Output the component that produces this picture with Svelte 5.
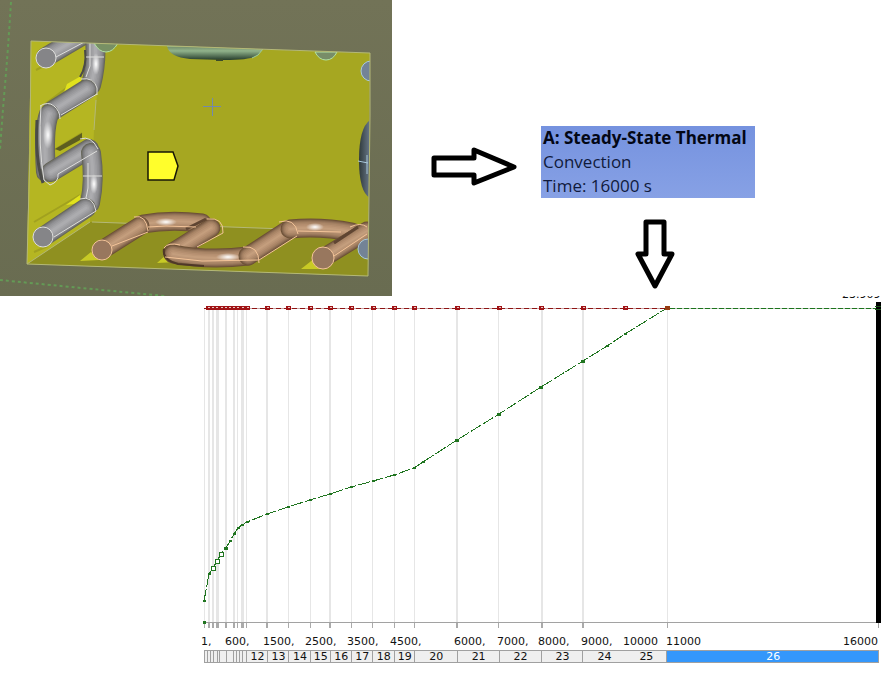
<script>
  const gridLines = [
    [204, 1], [208, 2], [212, 2], [216, 3], [225, 2], [233, 2], [237, 1], [241, 3], [246, 1],
    [266, 2], [288, 1], [310, 1], [329, 2], [351, 1], [372, 1], [394, 1], [414, 1],
    [456, 2], [498, 1], [541, 2], [582, 2], [667, 1]
  ];
  const limitMarks = [
    208, 212, 216, 221, 225, 229, 233, 237, 242, 247, 267, 288, 310, 330, 351, 373, 394, 414,
    457, 499, 541, 583, 625, 667
  ];
  const curve = [
    [204, 601], [209, 574], [213, 568], [217, 561], [221, 554], [226, 548], [230, 541],
    [234, 534], [238, 528], [242, 525], [247, 522], [267, 514], [288, 507], [310, 500],
    [330, 494], [351, 487], [373, 481], [394, 475], [414, 468], [423, 462], [457, 440],
    [499, 414], [541, 387], [583, 361], [607, 346], [625, 334], [667, 308]
  ];
  const curvePoints = curve.map((p) => p.join(',')).join(' ');
  const bigMarks = [226, 457, 499, 541, 583];
  const openMarks = [213, 217, 221];

  const timeLabels = [
    [201, '1,'], [225, '600,'], [263, '1500,'], [305, '2500,'], [347, '3500,'], [390, '4500,'],
    [454, '6000,'], [497, '7000,'], [538, '8000,'], [581, '9000,'], [623, '10000'],
    [666, '11000'], [843, '16000']
  ];

  const left = 204;
  const edges = [
    204, 207, 210, 213, 217, 219, 226, 233, 236, 239, 242, 246, 267, 288, 310, 330, 351, 372,
    394, 414, 457, 499, 541, 583, 625, 667, 879
  ];
  const steps = edges.slice(1).map((end, i) => ({
    number: i + 1,
    span: end - edges[i],
    label: i >= 11 ? String(i + 1) : ''
  }));

  // Nested strokes from the dark rim to the lit middle give a tube its roundness.
  const steel = [
    [20, '#66665a'], [18, '#747473'], [16, '#828284'], [14, '#8c8c8f'], [12, '#959598'],
    [9, '#9d9da0'], [6, '#a5a5a8'], [3, '#acacaf']
  ];
  const copper = [
    [19, '#6d5136'], [17, '#80624a'], [15, '#927257'], [13, '#a07d60'], [11, '#ab8768'],
    [8, '#b58f70'], [5, '#bd9777'], [2, '#c49e7d']
  ];
</script>

{#snippet pipe(d, tone)}
  <g fill="none" stroke-linecap="round" stroke-linejoin="round">
    {#each tone as [width, color]}
      <path {d} stroke={color} stroke-width={width} />
    {/each}
  </g>
{/snippet}

<main>
  <section class="top">
    <svg class="model" viewBox="0 0 392 296" role="img" aria-label="Convection surfaces of the tank model">
      <defs>
        <linearGradient id="backdrop" x1="0" y1="0" x2="0" y2="1">
          <stop offset="0" stop-color="#727357" />
          <stop offset="1" stop-color="#696c51" />
        </linearGradient>
        <linearGradient id="greenPipe" x1="0" y1="0" x2="0" y2="1">
          <stop offset="0" stop-color="#708866" />
          <stop offset=".35" stop-color="#91b38b" />
          <stop offset="1" stop-color="#263c2c" />
        </linearGradient>
        <linearGradient id="bluePipe" x1="0" y1="0" x2="1" y2="0">
          <stop offset="0" stop-color="#303a3c" />
          <stop offset="1" stop-color="#69788a" />
        </linearGradient>
        <radialGradient id="shine">
          <stop offset="0" stop-color="#fff" />
          <stop offset=".4" stop-color="#fff" stop-opacity=".6" />
          <stop offset="1" stop-color="#fff" stop-opacity="0" />
        </radialGradient>
        <clipPath id="room"><path d="M31 41L370 53 368 276 27 264Z" /></clipPath>
      </defs>
      <rect width="392" height="296" fill="url(#backdrop)" />
      <path d="M11 2Q8 50 5 85T0 150M0 280Q60 286 165 296" class="dots" />
      <path d="M31 41L370 53 368 276 27 264Z" fill="#a6a721" />
      <path d="M31 41L101 44 94 130 90 222 27 264Z" fill="#b5b622" />
      <path d="M27 264L90 222 368 232V276Z" fill="#8f9020" />
      <path d="M96 100L94 130M92 222L230 227 368 232M90 222L27 264" class="edge" />
      <g clip-path="url(#room)">
        <path d="M36 70L82 46M45 104L80 78M54 150L82 133M34 222L80 195M34 252L48 246" stroke="#a1a11f" stroke-width="2" />
        <path d="M55 149L82 133V139L60 151Z" fill="#5d5d20" />
        <path d="M67 84L81 76V87L64 92ZM66 205L80 195V203Z" fill="#e1e21c" />
        <path d="M80 261L91 252 99 260ZM157 263L167 254 177 262ZM301 269L315 258 322 269Z" fill="#c8ca25" />

        {@render pipe('M46 57L90 31', steel)}
        {@render pipe('M95 38Q97 63 91 85', steel)}
        {@render pipe('M87 89L52 111', steel)}
        {@render pipe('M49 114Q43 130 46 172', steel)}
        {@render pipe('M51 172L89 149', steel)}
        {@render pipe('M91 153Q95 180 90 203', steel)}
        {@render pipe('M86 208L43 237', steel)}
        <path d="M37 120Q35 160 43 183" fill="none" stroke="#4b4b48" stroke-width="3" />
        <path d="M85 50Q87 66 80 77" fill="none" stroke="#4b4b48" stroke-width="2" />
        <ellipse cx="96" cy="64" rx="4" ry="11" fill="url(#shine)" />
        <ellipse cx="48" cy="135" rx="5" ry="14" fill="url(#shine)" />
        <ellipse cx="94" cy="184" rx="4" ry="10" fill="url(#shine)" />
        <g class="steelLine">
          <circle cx="46" cy="58" r="10" fill="#858588" />
          <circle cx="43" cy="237" r="10" fill="#858588" />
          <path d="M56 57L90 39M90 43V66L86 77M86 57H104M81 79Q94 77 97 88V95M97 94L61 115M40 106Q48 101 54 106T60 119M41 106Q38 145 44 180L50 185M80 139Q91 135 98 149M58 174L97 151M58 174Q59 182 50 185M88 163V188L86 198M83 176H102M80 199Q93 195 96 211M96 211L54 237" fill="none" />
        </g>

        {@render pipe('M143 224Q170 219 202 223', copper)}
        {@render pipe('M211 228L173 252', copper)}
        {@render pipe('M173 254Q209 261 248 256', copper)}
        {@render pipe('M248 256L288 230', copper)}
        {@render pipe('M290 229Q320 226 352 232', copper)}
        {@render pipe('M367 231L323 258', copper)}
        {@render pipe('M140 226L102 250', copper)}
        <path d="M164 249Q162 260 178 264L204 266" fill="none" stroke="#4f3828" stroke-width="2" />
        <path d="M186 229L206 219M334 243L358 227" stroke="#5f4532" stroke-width="3" />
        <ellipse cx="166" cy="222" rx="11" ry="4" fill="url(#shine)" />
        <ellipse cx="228" cy="257" rx="12" ry="4" fill="url(#shine)" />
        <ellipse cx="315" cy="227" rx="9" ry="4" fill="url(#shine)" />
        <g class="copperLine">
          <circle cx="102" cy="250" r="10" fill="#98775e" />
          <circle cx="323" cy="258" r="11" fill="#98775e" />
          <path d="M134 217Q146 214 148 231M112 246L148 232M148 227L166 226 196 227M207 219Q224 217 223 233M223 233L197 247M164 248Q168 242 180 245M165 257L202 261 258 260M243 247Q259 245 259 263M259 260L297 236M279 222Q295 217 298 234M298 231L341 232M350 227Q361 222 367 227M334 256L367 234" fill="none" />
        </g>

        <path d="M94 43H118Q113 52 106 52T94 43Z" fill="#789064" stroke="#b2e4a4" />
        <path d="M167 46L263 49 258 55Q251 60 224 60L190 59Q169 57 167 46Z" fill="url(#greenPipe)" />
        <path d="M167 46L224 47 263 49 258 55 252 58" class="greenLine" />
        <path d="M216 60H223" stroke="#3b4b2a" stroke-width="2" />
        <path d="M315 52H337Q333 60 326 60T315 52Z" fill="#788d68" stroke="#b2e4a4" />
        <circle cx="371" cy="71" r="10" fill="#738396" class="blueLine" />
        <path d="M370 120Q359 128 359 160T370 198Z" fill="url(#bluePipe)" />
        <path d="M358 161L368 163M367 155V174" class="blueLine" />
        <circle cx="368" cy="249" r="10" fill="#738396" class="blueLine" />
      </g>
      <path d="M31 41L370 53 370 115 368 276 27 264 30 150Z" class="edge" />
      <path d="M203 106.5H221M212.500 98V116" stroke="#7389ad" fill="none" />
      <path d="M148 152H173L178 166 174 180H148Z" fill="#fffe2c" stroke="#171706" stroke-width="1.5" />
    </svg>

    <div class="flow">
      <svg class="arrowRight" width="88" height="40" viewBox="0 0 88 40" aria-hidden="true">
        <path d="M3 11H43V3L83 20 43 36V28H3Z" />
      </svg>
      <div class="result">
        <div class="card">
          <strong>A: Steady-State Thermal</strong>
          <span>Convection</span>
          <span>Time: 16000 s</span>
        </div>
        <svg class="arrowDown" width="42" height="72" viewBox="0 0 42 72" aria-hidden="true">
          <path d="M12 4H30V36H38L21 68 4 36H12Z" />
        </svg>
      </div>
    </div>
  </section>

  <section class="chart">
    <svg class="plot" viewBox="0 296 882 352" role="img" aria-label="Value against time in seconds">
      <g shape-rendering="crispEdges">
        {#each gridLines as [x, width]}
          <rect {x} y="308" {width} height="314" fill="#e6e6e6" />
          <rect {x} y="622" {width} height="6" fill="#aaa" />
        {/each}
        <path d="M204 622.5H879M878.5 622V628" stroke="#a2a2a2" />
        <path d="M204 308H667" stroke="#c9a5a5" />
        <path d="M204 308H667" stroke="#8e1414" stroke-dasharray="5 3" />
        {#each limitMarks as x}
          <rect x={x - 2} y="306" width="5" height="4" fill="#a01215" />
          <rect {x} y="307" width="2" height="1" fill="#e8c9c4" />
        {/each}
        <path d="M670 308H878" stroke="#b9c9b9" />
        <path d="M670 308H878" stroke="#1d741d" stroke-dasharray="5 2" />
        <polyline points={curvePoints} fill="none" stroke="#207520" stroke-dasharray="12 2" />
        {#each curve as [x, y]}
          {#if openMarks.includes(x)}
            <rect x={x - 2} y={y - 2} width="4" height="4" fill="#fff" stroke="#207520" />
          {:else if bigMarks.includes(x)}
            <rect x={x - 2} y={y - 1} width="4" height="3" fill="#207520" />
          {:else}
            <rect x={x - 1} y={y - 1} width="3" height="2" fill="#207520" />
          {/if}
        {/each}
        <rect x="203" y="621" width="3" height="3" fill="#207520" />
        <rect x="665" y="306" width="5" height="4" fill="#963c12" />
        <rect x="876" y="302" width="5" height="321" />
        <path d="M875 306.5H881M875 309.5H881" stroke="#174f17" />
      </g>
      <g class="labels">
        <text x="842" y="298">23.909</text>
        {#each timeLabels as [x, label]}
          <text {x} y="645">{label}</text>
        {/each}
      </g>
    </svg>
    <div class="steps" style:margin-left="{(left / 882) * 100}%">
      {#each steps as step}
        <button
          class:current={step.number === 26}
          class:joined={step.number === 24}
          style:flex-grow={step.span}
          aria-label="Step {step.number}">{step.label}</button>
      {/each}
    </div>
  </section>
</main>

<style>
  :global(body) {
    margin: 0;
    background: #fff;
  }
  main {
    font-family: 'Open Sans', 'Noto Sans', sans-serif;
    color: #000;
  }
  svg {
    display: block;
  }
  .top {
    display: grid;
    grid-template-columns: 4fr 5fr;
  }
  .model {
    width: 100%;
  }
  .flow {
    display: flex;
    align-items: flex-start;
    gap: 22px;
    padding: 126px 0 0 39px;
  }
  .arrowRight {
    flex: none;
    margin-top: 21px;
  }
  .arrowRight path,
  .arrowDown path {
    fill: #fff;
    stroke: #000;
    stroke-width: 5;
    stroke-linejoin: round;
  }
  .result {
    display: flex;
    flex-direction: column;
    align-items: center;
    gap: 20px;
  }
  .card {
    display: flex;
    flex-direction: column;
    box-sizing: border-box;
    min-width: 214px;
    padding: 0 2px;
    background: linear-gradient(#7592df, #87a1e5);
    font-size: 17px;
    line-height: 24px;
    white-space: nowrap;
    color: #101a3c;
  }
  .card strong {
    color: #030715;
  }
  .arrowDown {
    margin-left: 14px;
  }
  .dots {
    fill: none;
    stroke: #649a56;
    stroke-width: 2;
    stroke-dasharray: 3 3;
  }
  .edge {
    fill: none;
    stroke: #b4b878;
  }
  .steelLine { stroke: #dededc; }
  .copperLine { stroke: #f3c499; }
  .greenLine { fill: none; stroke: #9fce9b; }
  .blueLine { stroke: #a9c9db; }
  .chart {
    padding-bottom: 14px;
  }
  .plot {
    width: 100%;
  }
  .labels {
    font-family: 'DejaVu Sans', sans-serif;
    font-size: 11px;
    fill: #111;
  }
  .steps {
    display: flex;
    box-sizing: border-box;
    height: 13px;
    margin-top: 2px;
    margin-right: 3px;
    border: solid #a0a0a0;
    border-width: 1px 0 1px 1px;
  }
  .steps button {
    flex: 0 1 0;
    min-width: 0;
    padding: 0;
    border: 0;
    background: #efefef;
    box-shadow: inset -1px 0 #a0a0a0;
    color: #111;
    font: 11px/11px 'DejaVu Sans', sans-serif;
  }
  .steps .joined {
    box-shadow: none;
  }
  .steps .current {
    background: #3497fb;
    color: #fff;
  }
</style>
